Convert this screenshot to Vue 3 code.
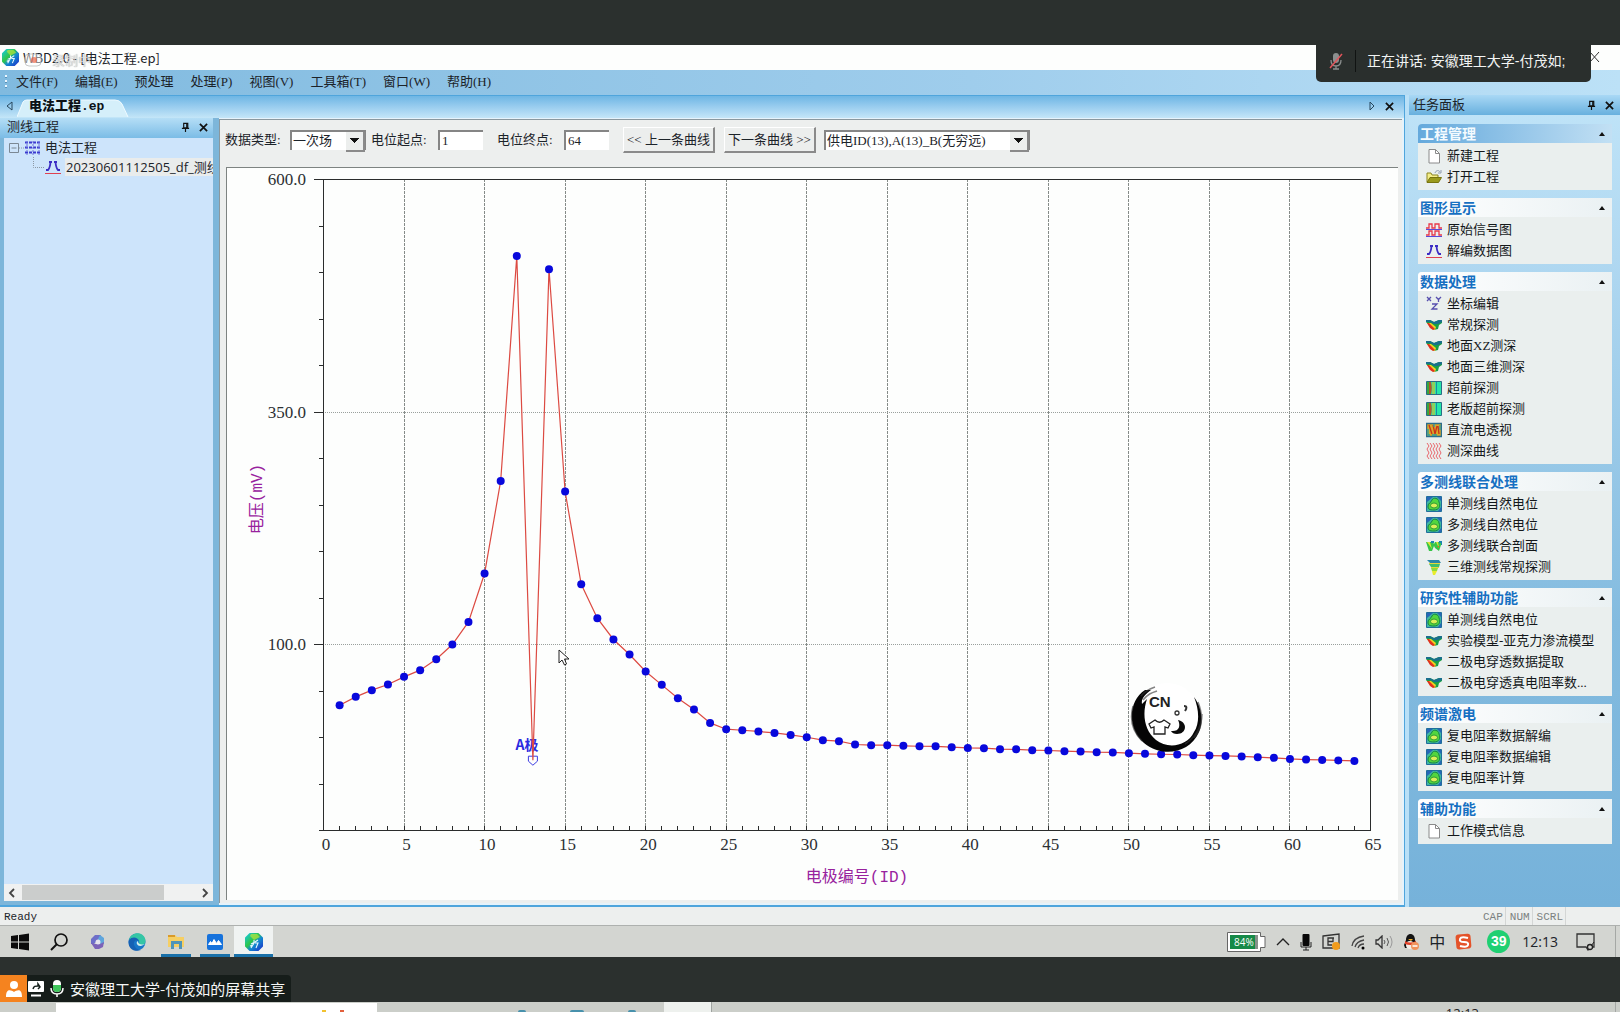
<script setup>
import { ref } from 'vue'

const menus = ['文件(F)', '编辑(E)', '预处理', '处理(P)', '视图(V)', '工具箱(T)', '窗口(W)', '帮助(H)']

const groups = [
  { title: '工程管理', main: true, items: [['page', '新建工程'], ['folder', '打开工程']] },
  { title: '图形显示', items: [['signal', '原始信号图'], ['peak', '解编数据图']] },
  {
    title: '数据处理',
    items: [
      ['xyz', '坐标编辑'], ['section', '常规探测'], ['section', '地面XZ测深'], ['section', '地面三维测深'],
      ['ahead', '超前探测'], ['ahead', '老版超前探测'], ['through', '直流电透视'], ['waves', '测深曲线'],
    ],
  },
  {
    title: '多测线联合处理',
    items: [['contour', '单测线自然电位'], ['contour', '多测线自然电位'], ['twin', '多测线联合剖面'], ['funnel', '三维测线常规探测']],
  },
  {
    title: '研究性辅助功能',
    items: [['contour', '单测线自然电位'], ['section', '实验模型-亚克力渗流模型'], ['section', '二极电穿透数据提取'], ['section', '二极电穿透真电阻率数...']],
  },
  { title: '频谱激电', items: [['contour', '复电阻率数据解编'], ['contour', '复电阻率数据编辑'], ['contour', '复电阻率计算']] },
  { title: '辅助功能', items: [['page', '工作模式信息']] },
]

const start = ref('1')
const end = ref('64')

const voltages = [
  34.7, 43.7, 50.9, 57, 65.2, 72.4, 84.2, 100, 124.3, 176.3, 275.9, 517.8, -24.4, 503.5, 264.5, 164.8,
  128.3, 105.4, 89.2, 71, 56.6, 42.3, 30.1, 15.7, 8.9, 7.8, 6.5, 4.9, 2.8, 0.3, -2.9, -4,
  -7.5, -8.2, -8.3, -9, -9.4, -9.5, -10.4, -11.2, -11.5, -12.5, -12.7, -13.6, -14, -14.7, -15.1, -15.8,
  -16.1, -16.9, -17.6, -18, -18.3, -19, -19.4, -19.8, -20.4, -21.2, -21.9, -23, -23.7, -24.1, -24.7, -25.2,
]
const plot = { left: 96, right: 1143, top: 11, bottom: 662 }
const sx = (id) => plot.left + (id * (plot.right - plot.left)) / 65
const sy = (mv) => plot.top + ((600 - mv) * (plot.bottom - plot.top)) / 700
const crisp = (n) => Math.round(n) + 0.5
const points = voltages.map((mv, i) => ({ id: i + 1, x: sx(i + 1) + 0.5, y: sy(mv) + 0.5 }))
const line = points.map((p) => `${p.x},${p.y}`).join(' ')
const dots = points.filter((p) => p.id !== 13)
const supply = points[12]
const majorX = Array.from({ length: 14 }, (_, i) => i * 5)
const minorX = Array.from({ length: 64 }, (_, i) => i + 1)
const majorY = [600, 350, 100]
const minorY = Array.from({ length: 15 }, (_, i) => 600 - i * 50)
</script>

<template>
  <div class="screen">
    <svg class="defs" width="0" height="0" aria-hidden="true">
      <symbol id="page" viewBox="0 0 16 16"><path d="M3 1.500h6.500l4 4v9.500h-10.500z" fill="#fff" stroke="#8a8a8a" /><path d="M9.500 1.500v4h4" fill="none" stroke="#8a8a8a" /></symbol>
      <symbol id="folder" viewBox="0 0 16 16"><path d="M1 13V4h4l1 2h6v3" fill="#f4ee8a" stroke="#8b8420" /><path d="M1 13.500l3-5h11.500l-3 5z" fill="#9a9a1c" stroke="#77740e" /><path d="M9 4c1-3 4-3 5-1M15 1v3h-3" fill="none" stroke="#8e9bb0" /></symbol>
      <symbol id="signal" viewBox="0 0 16 16"><path d="M0 6h3V2h3v4h3V2h4v4h3" fill="none" stroke="#e83a4a" stroke-width="1.300" /><path d="M0 13h3V9h3v4h3V9h4v4h3" fill="none" stroke="#e83a4a" stroke-width="1.300" /><path d="M0 7.500h16M0 14.500h16" stroke="#5a4bd8" /></symbol>
      <symbol id="peak" viewBox="0 0 16 16"><path d="M1 11h2q2-2 2.500-8M15 11h-2q-2-2-2.500-8M4 3h3M9 3h3" fill="none" stroke="#3b2cc4" stroke-width="1.800" /><path d="M0 14.500h16" stroke="#e04050" /></symbol>
      <symbol id="xyz" viewBox="0 0 16 16"><path d="M1 1l4 4M5 1l-4 4M10 1l2.500 2.500L15 1M12.500 3v3M6 8h5l-5 5h5.500" fill="none" stroke="#574fae" stroke-width="1.300" /></symbol>
      <symbol id="section" viewBox="0 0 16 16"><path d="M0 3h4l4 2 5-2h3v3l-3 2-1 4-4 1-3-2-5-6z" fill="#18a045" /><path d="M0 3h4l4 2 5-2h3v2l-4 2H8L4 5H0z" fill="#1a6f8c" /><path d="M1 6l4 0 5 4-1 3-3-1z" fill="#f2cf22" /><path d="M1 6h2l6 6-2 1-3-2z" fill="#e2301f" /></symbol>
      <symbol id="ahead" viewBox="0 0 16 16"><path d="M.5 1.500h15v13H.5z" fill="#27e6a8" stroke="#2a6d86" /><path d="M1 2h3v12H1z" fill="#3ba63a" /><path d="M3 2h2c1 4 1 8 0 12H3z" fill="#b1552a" /><path d="M6 2h3v12H6z" fill="#8fcf5c" /><path d="M10.500 2v12" stroke="#1e87a5" /></symbol>
      <symbol id="through" viewBox="0 0 16 16"><path d="M.5 1.500h15v13H.5z" fill="#d9a92b" stroke="#2b6d8c" stroke-width="1.500" /><path d="M3 3l3 9M7 3l2 9 2-8M12 4l1 8" fill="none" stroke="#c9321c" stroke-width="1.300" /><path d="M2 7v6h2M14 3v5M8 2v3M6 13h5" fill="none" stroke="#28a0a0" stroke-width="1.300" /></symbol>
      <symbol id="waves" viewBox="0 0 16 16"><path d="M1 0l2 3-2 3 2 4-2 3 2 3M4 0l2 3-2 3 2 4-2 3 2 3M7 0l2 3-2 3 2 4-2 3 2 3M10 0l2 3-2 3 2 4-2 3 2 3M13 0l2 3-2 3 2 4-2 3 2 3" fill="none" stroke="#e8666c" /></symbol>
      <symbol id="contour" viewBox="0 0 16 16"><path d="M.5.5h15v15H.5z" fill="#3fb8a0" stroke="#1f6e9c" /><path d="M1 1h6L1 6zM15 1v4l-4-4zM12 15l3-4v4z" fill="#2766b8" /><path d="M2 10c0-3 3-3 4-6s7-2 7 2c2 4 0 8-5 8s-6-1-6-4z" fill="#52d63e" stroke="#167f48" /><ellipse cx="8" cy="9.500" rx="3.500" ry="2.500" fill="#dcee5a" stroke="#2f9d35" /></symbol>
      <symbol id="twin" viewBox="0 0 16 16"><path d="M0 4h7l1 2 1-2h7l-3 9-4-3-1-2-2 5-3 0z" fill="#36c648" /><path d="M1 4h3l2 7zM10 4h2l1 6z" fill="#d9e33a" /><path d="M5 4h3M13 4h3v3" stroke="#1b87b0" stroke-width="2" fill="none" /><path d="M11 8h2v2z" fill="#e06a24" /></symbol>
      <symbol id="funnel" viewBox="0 0 16 16"><path d="M1 1h12l2 3H4z" fill="#2c86a8" /><path d="M3 5h11l-1 3H5z" fill="#3fbf6c" /><path d="M5 9h7l-1 3H6z" fill="#8fd93c" /><path d="M6 12h5l-2 4H7z" fill="#e8ec2c" /><path d="M3 4.500h11M5 8.500h8" stroke="#e9d838" /></symbol>
      <symbol id="wbd" viewBox="0 0 18 18"><linearGradient id="wg" x1="0" y1="0" x2="1" y2="1"><stop offset="0" stop-color="#16c8d8" /><stop offset=".4" stop-color="#2ec648" /><stop offset=".6" stop-color="#128ad0" /><stop offset="1" stop-color="#1b35c9" /></linearGradient><path d="M5 1l8 0 4 4v8l-4 4H5l-4-4V5z" fill="url(#wg)" stroke="url(#wg)" stroke-width="2" stroke-linejoin="round" /><path d="M5 3l4 4 6-3-3-3H6z" fill="#b6e63c" opacity=".7" /><path d="M6 11l4-2 3-2M9 7v3l-3 5M10 10h3l-2 5M5 13l3-1" fill="none" stroke="#e8f8ff" stroke-width="1.100" /></symbol>
      <symbol id="pin" viewBox="0 0 10 12"><path d="M3 1.500h4.500v5H3zM1 7h8M5 7v4" fill="none" stroke="#111" stroke-width="1.300" /><path d="M6.500 1v6" stroke="#111" stroke-width="1.500" /></symbol>
      <symbol id="close" viewBox="0 0 10 10"><path d="M1 1l8 8M9 1l-8 8" stroke="#111" stroke-width="1.900" /></symbol>
    </svg>

    <header class="share-bar"></header>

    <div class="app">
      <div class="title-bar">
        <svg class="app-icon"><use href="#wbd" /></svg>
        <span>WBD2.0 - [电法工程.ep]</span>
        <div class="recording">
          <svg width="18" height="14" viewBox="0 0 18 14"><rect x="1" y="1" width="16" height="12" rx="4" fill="#fff" fill-opacity=".6" stroke="#b9bcbc" /><circle cx="10" cy="7" r="3" fill="#ee7a62" /></svg>
          <span>录制中</span>
        </div>
        <button class="win-close" aria-label="关闭"><svg width="10" height="12" viewBox="0 0 10 12"><path d="M0 1l9 10M9 1L0 11" stroke="#333" /></svg></button>
      </div>

      <nav class="menu-bar">
        <i class="grip"></i>
        <button v-for="m in menus" :key="m">{{ m }}</button>
      </nav>

      <div class="workspace">
        <div class="main-col">
          <div class="tab-strip">
            <svg width="7" height="10" viewBox="0 0 7 10"><path d="M6 1v8L1 5z" fill="none" stroke="#27465c" /></svg>
            <div class="tab">
              <svg class="tab-shape" width="112" height="18" viewBox="0 0 112 18"><path d="M0 18L6 3Q7 1 10 1h88q5 0 7 4l6 13z" fill="#d5effa" /><path d="M0 18L6 3Q7 1 10 1h88q5 0 7 4l6 13" fill="none" stroke="#eefaff" /></svg>
              <b>电法工程.ep</b>
            </div>
            <span class="spring"></span>
            <svg width="6" height="10" viewBox="0 0 6 10"><path d="M1 1v8l4-4z" fill="none" stroke="#27465c" /></svg>
            <svg class="tab-close" width="9" height="9"><use href="#close" /></svg>
          </div>

          <div class="panes">
            <aside class="tree-pane">
              <div class="pane-head">
                <span>测线工程</span><span class="spring"></span>
                <svg width="9" height="11"><use href="#pin" /></svg>
                <svg width="9" height="9"><use href="#close" /></svg>
              </div>
              <div class="tree">
                <div class="node">
                  <svg width="16" height="18" viewBox="0 0 16 18"><path d="M.5 4.500h9v9h-9zM2.500 9h5" fill="none" stroke="#7b8894" /><path d="M10 9h6" stroke="#8c98a4" stroke-dasharray="1 1" /></svg>
                  <svg width="16" height="16" viewBox="0 0 16 16"><path d="M0 2.500h16M0 7.500h16M0 12.500h16" stroke="#3b3bd0" stroke-dasharray="3 1" stroke-width="2" /><path d="M2 1v14M8 1v14M14 1v14" stroke="#6f74dc" stroke-dasharray="2 1" /></svg>
                  <span>电法工程</span>
                </div>
                <div class="node leaf">
                  <svg width="12" height="19" viewBox="0 0 12 19"><path d="M.5 0v10.500H12" fill="none" stroke="#8c98a4" stroke-dasharray="1 1" /></svg>
                  <svg width="16" height="16"><use href="#peak" /></svg>
                  <span class="selected">20230601112505_df_测线</span>
                </div>
              </div>
              <div class="scrollbar">
                <svg width="8" height="10" viewBox="0 0 8 10"><path d="M6 1L2 5l4 4" fill="none" stroke="#444" stroke-width="1.800" /></svg>
                <i></i>
                <svg width="8" height="10" viewBox="0 0 8 10"><path d="M2 1l4 4-4 4" fill="none" stroke="#444" stroke-width="1.800" /></svg>
              </div>
            </aside>

            <section class="document">
              <div class="toolbar">
                <label for="kind">数据类型:</label>
                <div class="combo kind"><select id="kind"><option>一次场</option></select></div>
                <label for="from">电位起点:</label>
                <input id="from" v-model="start">
                <label for="to">电位终点:</label>
                <input id="to" v-model="end">
                <button>&lt;&lt; 上一条曲线</button>
                <button>下一条曲线 &gt;&gt;</button>
                <div class="combo supply"><select aria-label="供电电极"><option>供电ID(13),A(13)_B(无穷远)</option></select></div>
              </div>

              <div class="chart">
                <svg class="plot" viewBox="0 0 1171 731" preserveAspectRatio="xMinYMin meet">
                  <g class="grid">
                    <line v-for="v in majorX.slice(1, -1)" :key="v" :x1="crisp(sx(v))" :x2="crisp(sx(v))" :y1="plot.top" :y2="plot.bottom" />
                  </g>
                  <g class="grid-h">
                    <line v-for="v in [350, 100]" :key="v" :x1="plot.left" :x2="plot.right" :y1="crisp(sy(v))" :y2="crisp(sy(v))" />
                  </g>
                  <g class="axis">
                    <rect :x="plot.left + 0.5" :y="plot.top + 0.5" :width="plot.right - plot.left" :height="plot.bottom - plot.top" />
                    <line v-for="v in minorX" :key="'x' + v" :x1="crisp(sx(v))" :x2="crisp(sx(v))" :y1="plot.bottom - 4" :y2="plot.bottom" />
                    <line v-for="v in minorY" :key="'y' + v" :x1="plot.left - 4" :x2="plot.left" :y1="crisp(sy(v))" :y2="crisp(sy(v))" />
                    <line v-for="v in majorY" :key="'m' + v" :x1="plot.left - 9" :x2="plot.left" :y1="crisp(sy(v))" :y2="crisp(sy(v))" />
                  </g>
                  <g class="ticks">
                    <text v-for="v in majorX" :key="v" :x="sx(v) + 3" y="682" text-anchor="middle">{{ v }}</text>
                    <text v-for="v in majorY" :key="v" x="79" :y="sy(v) + 6" text-anchor="end">{{ v.toFixed(1) }}</text>
                  </g>
                  <text class="axis-name" x="630" y="714" text-anchor="middle">电极编号(ID)</text>
                  <text class="axis-name" transform="translate(35 331) rotate(-90)" text-anchor="middle">电压(mV)</text>
                  <text class="mark" :x="supply.x - 6" :y="supply.y - 10" text-anchor="middle">A极</text>
                  <path :d="`M${supply.x - 4.5} ${supply.y - 4}h9v5l-4.500 4l-4.500-4z`" fill="none" stroke="#3c3ce0" />
                  <polyline :points="line" fill="none" stroke="#dc4a42" stroke-width="1.200" />
                  <circle v-for="p in dots" :key="p.id" :cx="p.x" :cy="p.y" r="4" fill="#0808dc" />
                </svg>

                <svg class="cursor" width="12" height="18" viewBox="0 0 12 18"><path d="M1 1v13l3-3 2.500 5 2-1-2-5H11z" fill="#fff" stroke="#222" /></svg>

                <div class="ime">
                  <svg viewBox="0 0 76 76">
                    <circle cx="38" cy="38" r="34" fill="#fff" />
                    <path d="M16 11C-1 22-2 50 15 64c16 14 45 12 55-11 4-9 4-23-5-35 5 12 6 26 0 35C58 68 38 70 27 61 15 51 13 35 18 20l-5 5c-1-6 3-9 9-14z" fill="#050505" />
                    <path d="M12 17c4-5 8-7 14-9M14 21c5-6 8-7 14-9M4 27C0 42 4 53 13 62M69 23c6 15 4 27-4 36M73 35c0 12-7 24-17 30" fill="none" stroke="#333" stroke-opacity=".6" stroke-width="1.500" />
                    <path d="M26 41l-6 4 2 4 3-1v7h11v-7l3 1 2-4-6-4c-3 3-6 3-9 0z" fill="#fff" stroke="#222" stroke-width="1.300" />
                    <path d="M49 41c10 2 9 14-1 14-3 0-5-1-6-3 8 1 10-5 7-11z" fill="#0a0a0a" />
                    <circle cx="48" cy="34" r="2" fill="none" stroke="#333" stroke-width="1.300" />
                    <path d="M55 27c3 0 3 2 1 5" fill="none" stroke="#333" stroke-width="2" />
                  </svg>
                  <b>CN</b>
                </div>
              </div>
            </section>
          </div>
        </div>

        <aside class="task-pane">
          <div class="task-head">
            <span>任务面板</span><span class="spring"></span>
            <svg width="9" height="11"><use href="#pin" /></svg>
            <svg width="9" height="9"><use href="#close" /></svg>
          </div>
          <div class="groups">
            <section v-for="g in groups" :key="g.title" class="group" :class="{ main: g.main }">
              <h2>{{ g.title }}<svg width="6" height="4" viewBox="0 0 6 4"><path d="M0 4l3-4 3 4z" fill="#111" /></svg></h2>
              <ul>
                <li v-for="[icon, name] in g.items" :key="name">
                  <svg width="16" height="16"><use :href="'#' + icon" /></svg><a href="#">{{ name }}</a>
                </li>
              </ul>
            </section>
          </div>
        </aside>
      </div>

      <div class="status-bar"><span>Ready</span><span class="spring"></span><span class="key">CAP</span><span class="key">NUM</span><span class="key">SCRL</span></div>
    </div>

    <footer class="taskbar">
      <div class="launch">
        <button aria-label="开始"><svg width="18" height="18" viewBox="0 0 18 18"><path d="M0 3l7-1v6.500H0zM8 2l10-1.500v8H8zM0 9.500h7V16l-7-1zM8 9.500h10v8L8 16z" fill="#0b0b0b" /></svg></button>
        <button aria-label="搜索"><svg width="18" height="18" viewBox="0 0 18 18"><circle cx="11" cy="7" r="6" fill="none" stroke="#111" stroke-width="1.700" /><path d="M7 11l-6 6" stroke="#111" stroke-width="2" /></svg></button>
        <button aria-label="助手"><svg width="16" height="16" viewBox="0 0 16 16"><path d="M5 1h6l-2 4-5 5-3 0V5z" fill="#6e6fc9" /><path d="M10 1l4 3v6l-4 0-2-5z" fill="#5fa6dc" /><path d="M1 9l4 1 5 0 4-2-1 5-4 2H5z" fill="#7c63b8" /><circle cx="8" cy="8" r="2.500" fill="#e5e4ee" /></svg></button>
        <button aria-label="浏览器"><svg width="18" height="18" viewBox="0 0 18 18"><circle cx="9" cy="9" r="8.500" fill="#1877c9" /><path d="M1 7C3-2 17-2 17.500 8c0 4-4 5-7 3 2-2 0-5-3-5S2 7 1 7z" fill="#35c6a5" /><path d="M1 7c3-4 9-3 10 1-3-2-6 0-5 4 1 3 4 5 7 5C5 20-1 14 1 7z" fill="#1561b4" /><path d="M17 11c-2 2-7 3-8 0-1-2 1-3 1-3 0 4 4 4 7 3z" fill="#d9f0ee" /></svg></button>
        <button class="running" aria-label="文件"><svg width="18" height="16" viewBox="0 0 18 16"><path d="M1 1h7l2 2h7v10H1z" fill="#f6cf63" /><path d="M1 1h7v2H1z" fill="#d99a2a" /><path d="M4 15V7h11v8h-3v-5H7v5z" fill="#4f94b8" /></svg></button>
        <button class="running" aria-label="会议"><svg width="16" height="16" viewBox="0 0 16 16"><rect width="16" height="16" rx="2" fill="#1672dc" /><path d="M1.500 10.500l2-3 1.500 2 2-4 2.500 4 2-3 3 4z" fill="#fff" stroke="#fff" stroke-linejoin="round" /></svg></button>
        <button class="running active" aria-label="WBD"><svg width="18" height="18"><use href="#wbd" /></svg></button>
      </div>
      <div class="tray">
        <svg width="39" height="20" viewBox="0 0 39 20"><path d="M.5.5h33v4H38v11h-4.500v4H.5z" fill="#fff" stroke="#666" /><rect x="3" y="3" width="28" height="14" fill="#87918b" /><rect x="3" y="3" width="25" height="14" fill="#168a48" /><text x="7" y="14" font-size="10" fill="#fff">84%</text></svg>
        <svg width="14" height="8" viewBox="0 0 14 8"><path d="M1 7l6-6 6 6" fill="none" stroke="#222" stroke-width="1.400" /></svg>
        <svg width="12" height="18" viewBox="0 0 12 18"><rect x="2.500" y="1" width="7" height="12" rx="1" fill="#080808" /><path d="M1 9v5h10V9M6 14v3M3 17h6" fill="none" stroke="#222" /></svg>
        <svg width="19" height="18" viewBox="0 0 19 18"><path d="M1 3l16-2v14H1z" fill="none" stroke="#333" stroke-width="1.300" /><path d="M12 5H6v7h4M6 8.500h5V5" fill="none" stroke="#333" stroke-width="1.300" /><circle cx="14" cy="13" r="4" fill="#f09b1c" /></svg>
        <svg width="14" height="16" viewBox="0 0 14 16"><path d="M1 12C2 6 6 3 13 2M4 13c1-4 4-6 9-7M7 14c1-3 3-4 6-4" fill="none" stroke="#444" stroke-width="1.300" /><circle cx="12" cy="14" r="1.500" /></svg>
        <svg width="18" height="14" viewBox="0 0 18 14"><path d="M1 5h2l4-4v12L3 9H1z" fill="none" stroke="#333" stroke-width="1.300" /><path d="M9 5q2 2 0 4M12 3q3 4 0 8" fill="none" stroke="#555" /><path d="M15 1q4 6 0 12" fill="none" stroke="#999" /></svg>
        <svg width="16" height="18" viewBox="0 0 16 18"><path d="M3 7c0-8 9-8 9 0l2 5-1 3H2l-1-3z" fill="#141414" /><ellipse cx="7" cy="12" rx="4" ry="4" fill="#f4eee8" /><path d="M2 8q5 3 11 0v3q-6 2-11 0z" fill="#e2432a" /><path d="M5 6h5l-2 2z" fill="#f2b22e" /><circle cx="12" cy="13" r="4" fill="#f0935c" /><path d="M9.500 13h5" stroke="#fff" stroke-width="1.500" /></svg>
        <span class="zh">中</span>
        <svg width="18" height="18" viewBox="0 0 18 18"><rect x="1" y="1" width="15" height="15" rx="3" fill="#e4532a" transform="rotate(-5 9 9)" /><path d="M13 5q-7-2-8 1t4 3 4 3-8 1" fill="none" stroke="#fff" stroke-width="2" /></svg>
        <span class="badge">39</span>
        <time>12:13</time>
        <svg width="19" height="18" viewBox="0 0 19 18"><path d="M1 1h17v13h-4l-2 3-2-3H1z" fill="none" stroke="#333" stroke-width="1.300" /><circle cx="14" cy="14" r="2.500" fill="#d4d5d1" stroke="#222" stroke-width="1.300" /><path d="M15 13l3-4" stroke="#222" /></svg>
        <i class="peek"></i>
      </div>
    </footer>

    <div class="meeting-bar">
      <div class="presenter">
        <span class="person"><svg width="18" height="18" viewBox="0 0 18 18"><circle cx="9" cy="5" r="4" fill="#fff" /><path d="M1 17c0-9 5-7 8-5 3-2 8-4 8 5z" fill="#fff" /></svg></span>
        <svg width="16" height="16" viewBox="0 0 16 16"><rect width="16" height="11" rx="1" fill="#fff" /><path d="M5 8c1-3 2-3 5-3V3l2 3-2 2" fill="none" stroke="#16201c" stroke-width="1.500" /><path d="M3 14.500h10" stroke="#fff" stroke-width="2" /></svg>
        <svg width="14" height="18" viewBox="0 0 14 18"><rect x="3" y="0" width="8" height="12" rx="4" fill="#fff" /><path d="M3 5h8v3q0 4-4 4T3 8z" fill="#3fc65c" /><path d="M1 8q0 6 6 6t6-6M7 14v3" fill="none" stroke="#fff" stroke-width="1.500" /></svg>
        <span>安徽理工大学-付茂如的屏幕共享</span>
      </div>
    </div>

    <div class="local-taskbar">
      <div class="search-box"><i class="yellow"></i><i class="red"></i></div>
      <div class="local-icons"><i></i><i class="wide"></i><i></i></div>
      <div class="local-active"></div>
      <span class="spring"></span>
      <time>12:13</time>
      <i class="edge"></i>
    </div>

    <div class="speaking">
      <svg width="16" height="18" viewBox="0 0 16 18"><rect x="5" y="1" width="6" height="10" rx="3" fill="#8b8f8e" /><path d="M3 8q0 6 5 6t5-6M8 14v3M5 17h6" fill="none" stroke="#8b8f8e" stroke-width="1.300" /><path d="M14 2L2 16" stroke="#e2545a" stroke-width="1.500" /></svg>
      <i></i>
      <span>正在讲话: 安徽理工大学-付茂如;</span>
    </div>
  </div>
</template>

<style>
body {
  margin: 0;
  overflow: hidden;
}
</style>

<style scoped>
* {
  box-sizing: border-box;
}
.screen {
  position: relative;
  display: flex;
  flex-direction: column;
  height: 100vh;
  background: #2b302e;
  color: #1c2329;
  font: 13px/18px "Liberation Serif", "Noto Sans CJK SC", sans-serif;
}
.defs {
  position: absolute;
}
svg {
  flex: none;
  display: block;
}
button {
  font: inherit;
  color: inherit;
  border: 0;
  padding: 0;
  background: none;
}
.spring {
  flex: 1;
}
.share-bar {
  flex: none;
  height: 45px;
}
.app {
  flex: 1;
  min-height: 0;
  display: flex;
  flex-direction: column;
  background: #b9e0f7;
}

/* title and menu */
.title-bar {
  position: relative;
  flex: none;
  height: 25px;
  display: flex;
  align-items: center;
  gap: 4px;
  padding-left: 2px;
  background: #fdfefd;
  font: 13px/18px "Noto Sans CJK SC", sans-serif;
}
.app-icon {
  width: 17px;
  height: 17px;
}
.recording {
  position: absolute;
  left: 24px;
  top: 6px;
  display: flex;
  align-items: center;
  gap: 10px;
  color: #d9dbdb;
  text-shadow: 0 0 1px #888;
  opacity: 0.8;
}
.win-close {
  position: absolute;
  right: 20px;
  top: 6px;
}
.menu-bar {
  flex: none;
  height: 25px;
  display: flex;
  align-items: center;
  gap: 17px;
  padding: 0 0 2px 5px;
  background: linear-gradient(90deg, #80badf, #9fcdec 60%, #bce1f7);
}
.menu-bar .grip {
  width: 2px;
  height: 13px;
  margin-right: -8px;
  background: repeating-linear-gradient(#e9f6ff 0 2px, #5c93b8 2px 3px, transparent 3px 5px);
}

/* work area */
.workspace {
  flex: 1;
  min-height: 0;
  display: flex;
}
.main-col {
  flex: 1;
  min-width: 0;
  display: flex;
  flex-direction: column;
  border: solid #4fa5dc;
  border-width: 1px 1px 2px 0;
  margin-right: 4px;
  background: #e6f3fb;
}
.tab-strip {
  flex: none;
  height: 22px;
  display: flex;
  align-items: center;
  padding: 0 10px 2px 6px;
  background: linear-gradient(#6eb6e4, #96cbee 45%, #c4e6f8);
}
.tab {
  position: relative;
  align-self: flex-end;
  width: 112px;
  height: 17px;
  margin-left: 4px;
  padding-left: 12px;
  font: bold 13px/16px "Liberation Mono", "Noto Sans CJK SC", monospace;
}
.tab b {
  position: relative;
  color: #0c1216;
}
.tab-shape {
  position: absolute;
  left: 0;
  top: 0;
}
.tab-close {
  margin-left: 10px;
}
.panes {
  flex: 1;
  min-height: 0;
  display: flex;
}
.tree-pane {
  flex: none;
  width: 219px;
  display: flex;
  flex-direction: column;
  padding: 0 6px 4px 4px;
  background: #7db6da;
}
.pane-head {
  flex: none;
  height: 20px;
  margin-left: -4px;
  display: flex;
  align-items: center;
  gap: 9px;
  padding: 0 5px 2px 7px;
  background: linear-gradient(#b5def6, #7bbce6);
}
.tree {
  flex: 1;
  overflow: hidden;
  background: #cde4fb;
}
.node {
  height: 19px;
  display: flex;
  align-items: center;
  padding-left: 5px;
  white-space: nowrap;
}
.node span {
  margin-left: 4px;
}
.node.leaf {
  padding-left: 29px;
  font: 13px/18px "Open Sans", "Noto Sans CJK SC", sans-serif;
}
.node .selected {
  padding: 0 1px;
  background: #e9ecec;
}
.scrollbar {
  flex: none;
  height: 17px;
  display: flex;
  align-items: center;
  padding: 0 4px;
  background: #f0f1f1;
}
.scrollbar i {
  width: 142px;
  height: 15px;
  margin: 0 auto 0 6px;
  background: #cbcdcc;
}
.document {
  flex: 1;
  min-width: 0;
  display: flex;
  flex-direction: column;
  margin: 1px 2px 2px 0;
  border: solid #8b989e;
  border-width: 1px 0 0 1px;
  background: #edefee;
}
.toolbar {
  flex: none;
  height: 47px;
  display: flex;
  align-items: center;
  padding: 0 5px 7px;
}
.toolbar label {
  width: 65px;
  white-space: nowrap;
}
.toolbar input,
.combo {
  height: 20px;
  border: solid #858585;
  border-width: 2px 0 0 2px;
  background: #fff;
}
.toolbar input {
  width: 45px;
  margin: 0 14px 0 2px;
  padding: 0 2px;
  outline: 0;
  color: inherit;
  font: inherit;
}
.toolbar button {
  width: 92px;
  height: 26px;
  margin-right: 9px;
  border: solid;
  border-width: 1px 2px 2px 1px;
  border-color: #fff #8a8a8a #8a8a8a #fff;
  background: #eceeed;
  white-space: nowrap;
}
.combo {
  position: relative;
  border-right: 1px solid #858585;
}
.combo::after {
  content: "";
  position: absolute;
  top: 0;
  right: 0;
  width: 17px;
  height: 18px;
  border: solid #8a8a8a;
  border-width: 0 2px 2px 0;
  background: linear-gradient(#111, #111) 4px 6px / 9px 1px no-repeat,
    linear-gradient(#111, #111) 5px 7px / 7px 1px no-repeat,
    linear-gradient(#111, #111) 6px 8px / 5px 1px no-repeat,
    linear-gradient(#111, #111) 7px 9px / 3px 1px no-repeat,
    linear-gradient(#111, #111) 8px 10px / 1px 1px no-repeat, #eceeed;
  pointer-events: none;
}
.combo select {
  appearance: none;
  display: block;
  width: 100%;
  height: 18px;
  padding: 0 1px;
  border: 0;
  background: none;
  color: inherit;
  font: inherit;
}
.combo.kind {
  width: 76px;
  margin-right: 5px;
}
.combo.supply {
  width: 206px;
  margin-left: -1px;
}

/* chart */
.chart {
  position: relative;
  flex: 1;
  min-height: 0;
  margin: 0 4px 3px 6px;
  border: solid #7d8381;
  border-width: 1px 0 0 1px;
  background: #fdfefd;
}
.plot {
  width: 100%;
  height: 100%;
}
.grid line {
  stroke: #858b88;
  stroke-dasharray: 3 1;
}
.grid-h line {
  stroke: #9aa09d;
  stroke-dasharray: 1 1;
}
.axis line,
.axis rect {
  fill: none;
  stroke: #2a2c2c;
}
.ticks text {
  font: 17px "Liberation Serif", serif;
  fill: #2c3033;
}
.axis-name {
  font: 16px "Liberation Mono", "Noto Sans CJK SC", monospace;
  fill: #98229e;
}
.mark {
  font: bold 14px "Noto Sans CJK SC", sans-serif;
  fill: #2a2ae0;
}
.cursor {
  position: absolute;
  left: 331px;
  top: 481px;
}
.ime {
  position: absolute;
  left: 902px;
  top: 511px;
  width: 76px;
}
.ime b {
  position: absolute;
  left: 20px;
  top: 14px;
  font: bold 15px/18px "Liberation Sans", sans-serif;
  color: #222;
}

/* task pane */
.task-pane {
  flex: none;
  width: 211px;
  display: flex;
  flex-direction: column;
  background: linear-gradient(#c0e4f8, #b0d8f1 20%, #83bbdf 65%, #76b2da);
}
.task-head {
  flex: none;
  height: 20px;
  display: flex;
  align-items: center;
  gap: 9px;
  padding: 0 6px 0 4px;
  background: linear-gradient(#a9d8f5, #68b0de);
}
.groups {
  display: flex;
  flex-direction: column;
  gap: 8px;
  padding: 9px 8px 0 9px;
}
.group {
  border-radius: 4px 0 0 0;
  background: #eaefee;
  overflow: hidden;
}
.group h2 {
  height: 19px;
  margin: 0;
  padding: 0 7px 0 2px;
  display: flex;
  align-items: center;
  justify-content: space-between;
  background: linear-gradient(90deg, #fff, #eaf1f3);
  color: #1670c2;
  font: bold 14px/19px "Noto Sans CJK SC", sans-serif;
}
.group.main h2 {
  background: linear-gradient(90deg, #64a9dc, #c2e0f4);
  color: #f4fbff;
}
.group ul {
  margin: 0;
  padding: 2px 0 3px 8px;
  list-style: none;
}
.group li {
  height: 21px;
  display: flex;
  align-items: center;
  gap: 5px;
}
.group a {
  color: #14181a;
  text-decoration: none;
  white-space: nowrap;
}

/* status and task bars */
.status-bar {
  flex: none;
  height: 18px;
  display: flex;
  padding: 0 54px 0 4px;
  background: #edefee;
  font: 11px/20px "Liberation Mono", monospace;
}
.status-bar .key {
  padding: 0 2px;
  margin-left: 2px;
  border-right: 1px solid #d4d6d5;
  color: #7b8180;
}
.taskbar {
  flex: none;
  height: 32px;
  display: flex;
  justify-content: space-between;
  border-top: 1px solid #aeb1af;
  background: #d3d5d1;
}
.launch {
  display: flex;
}
.launch button {
  width: 39px;
  display: grid;
  place-items: center;
}
.launch .running {
  background: linear-gradient(#1970a8, #1970a8) 50% 100% / 30px 3px no-repeat;
}
.launch .active {
  background: linear-gradient(#1970a8, #1970a8) 0 100% / 100% 3px no-repeat, #f0f3f2;
}
.tray {
  display: flex;
  align-items: center;
  gap: 10px;
  font: 14px/20px "Open Sans", "Noto Sans CJK SC", sans-serif;
}
.tray .zh {
  width: 16px;
  font-size: 16px;
}
.tray .badge {
  width: 23px;
  height: 23px;
  margin: 0 2px 0 4px;
  border-radius: 50%;
  background: #1fd072;
  color: #fff;
  font: bold 14px/23px "Liberation Sans", sans-serif;
  text-align: center;
}
.tray time {
  margin-right: 8px;
}
.tray .peek {
  width: 5px;
  height: 31px;
  margin-left: 10px;
  border-left: 1px solid #a5a8a5;
}
.meeting-bar {
  flex: none;
  height: 45px;
  display: flex;
  align-items: flex-end;
}
.presenter {
  height: 27px;
  display: flex;
  align-items: center;
  gap: 6px;
  padding-right: 6px;
  border-radius: 0 4px 0 0;
  background: #161d1a;
  color: #f5f7f6;
  font: 15px/20px "Noto Sans CJK SC", sans-serif;
}
.presenter .person {
  width: 27px;
  height: 27px;
  display: grid;
  place-items: center;
  margin-right: -5px;
  background: #f5831f;
}
.local-taskbar {
  flex: none;
  height: 10px;
  display: flex;
  overflow: hidden;
  background: #cbcec9;
}
.search-box {
  width: 321px;
  margin: 1px 0 0 56px;
  display: flex;
  align-items: flex-end;
  gap: 14px;
  padding-left: 266px;
  background: #fff;
}
.search-box i {
  width: 4px;
  height: 2px;
  background: #f2c230;
}
.search-box .red {
  background: #e2603c;
}
.local-icons {
  width: 287px;
  display: flex;
  align-items: flex-end;
  justify-content: flex-end;
  gap: 44px;
  padding-right: 28px;
}
.local-icons i {
  width: 8px;
  height: 2px;
  border-radius: 4px 4px 0 0;
  background: #4791ac;
}
.local-icons .wide {
  width: 14px;
}
.local-active {
  width: 48px;
  border-right: 1px solid #9fa3a0;
  background: #eef1ee;
}
.local-taskbar time {
  margin: 2px 136px 0 0;
  color: #222;
  font: 13px/18px "Open Sans", sans-serif;
}
.local-taskbar .edge {
  width: 5px;
  border-left: 1px solid #a5a8a5;
}

/* speaker notice laid over the title bar */
.speaking {
  position: absolute;
  top: 40px;
  right: 29px;
  width: 275px;
  height: 42px;
  display: flex;
  align-items: center;
  gap: 11px;
  padding-left: 12px;
  border-radius: 5px;
  background: #2a2f2d;
  color: #f2f4f3;
  font: 14px/20px "Liberation Sans", "Noto Sans CJK SC", sans-serif;
}
.speaking i {
  width: 1px;
  height: 22px;
  background: #101312;
}
</style>
